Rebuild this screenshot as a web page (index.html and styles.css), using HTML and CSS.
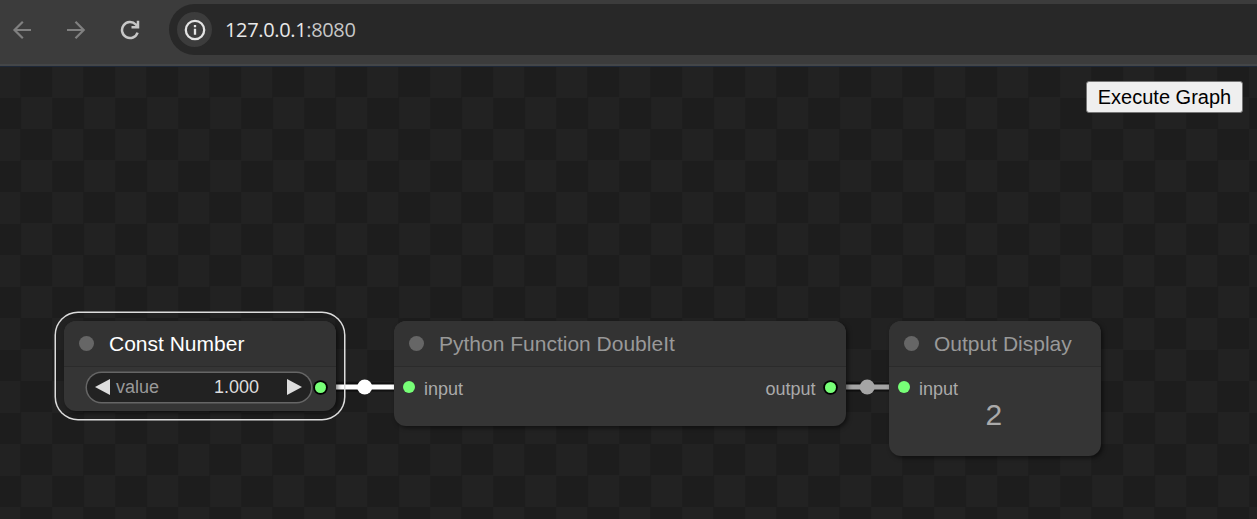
FILE: index.html
```html
<!DOCTYPE html>
<html lang="en">
<head>
<meta charset="utf-8">
<title>Graph Editor</title>
<link rel="stylesheet" href="styles.css">
</head>
<body>
<header class="toolbar">
  <nav class="nav-buttons">
    <svg class="nav-icon dim" viewBox="0 0 20 20"><path d="M19 10H2.500M10.800 1.800L2.500 10l8.300 8.200"/></svg>
    <svg class="nav-icon dim" viewBox="0 0 20 20"><path d="M1 10h16.500M9.500 1.800L17.700 10l-8.200 8.200"/></svg>
    <svg class="nav-icon" viewBox="0 0 20 20"><path d="M17.600 12.600A8 8 0 1 1 15.800 4.500l2 2.300M18 .8v6.500h-6.500"/></svg>
  </nav>
  <div class="address-bar">
    <span class="site-info">
      <svg viewBox="0 0 22 22"><circle cx="11" cy="11" r="9.200"/><path d="M11 9.800v6M11 6v2.200"/></svg>
    </span>
    <span class="url"><span class="host">127.0.0.1</span>:8080</span>
  </div>
</header>
<main class="canvas">
  <button class="execute">Execute Graph</button>
  <svg class="links" viewBox="0 0 1257 453">
    <path class="link-edge" d="M320 321H409M830 321H904"/>
    <path class="link active" d="M320 321H409"/>
    <path class="link" d="M830 321H904"/>
    <circle class="link-dot active" cx="364.700" cy="321" r="7.500"/>
    <circle class="link-dot" cx="867.200" cy="321" r="7.500"/>
  </svg>
  <section class="node const-node selected">
    <h2 class="node-title">Const Number</h2>
    <div class="node-body">
      <div class="number-widget">
        <svg class="arrow" viewBox="0 0 15 16"><path d="M15 0v16L0 8z"/></svg>
        <span class="widget-name">value</span>
        <span class="widget-value">1.000</span>
        <svg class="arrow" viewBox="0 0 15 16"><path d="M0 0v16l15-8z"/></svg>
      </div>
      <i class="slot out"></i>
    </div>
  </section>
  <section class="node function-node">
    <h2 class="node-title">Python Function DoubleIt</h2>
    <div class="node-body">
      <div class="port"><i class="slot"></i><span>input</span></div>
      <div class="port"><span>output</span><i class="slot out"></i></div>
    </div>
  </section>
  <section class="node display-node">
    <h2 class="node-title">Output Display</h2>
    <div class="node-body">
      <div class="port"><i class="slot"></i><span>input</span></div>
      <output class="result">2</output>
    </div>
  </section>
</main>
</body>
</html>
```
FILE: styles.css
```css
* { box-sizing: border-box; }

body {
  margin: 0;
  height: 519px;
  display: flex;
  flex-direction: column;
  overflow: hidden;
  background: #1d1d1d;
  font-family: "Liberation Sans", Arial, sans-serif;
}

.toolbar {
  display: flex;
  height: 66px;
  padding: 4px 0 0 12px;
  background: #3c3c3c;
  border-bottom: 2px solid #444648;
}

.nav-buttons {
  display: flex;
  gap: 34px;
  width: 157px;
  height: 51px;
  align-items: center;
}

.nav-icon {
  width: 20px;
  height: 20px;
  fill: none;
  stroke: #c7c7c7;
  stroke-width: 2.5;
}

.nav-icon.dim { stroke: #808080; stroke-width: 2.2; }

.address-bar {
  flex: 1;
  display: flex;
  align-items: center;
  height: 51px;
  padding-left: 8px;
  gap: 13px;
  background: #282828;
  border-radius: 26px 0 0 26px;
}

.site-info {
  display: grid;
  place-items: center;
  width: 35px;
  height: 35px;
  border-radius: 50%;
  background: #3c3c3c;
}

.site-info svg {
  width: 22px;
  height: 22px;
  fill: none;
  stroke: #e3e3e3;
  stroke-width: 2.3;
}

.url {
  font: 20px/27px "Open Sans", sans-serif;
  letter-spacing: -0.35px;
  color: #c7c7c7;
}

.host { color: #e8e8e8; }

.canvas {
  position: relative;
  flex: 1;
  border-top: 1px solid #1e2838;
  background-image: conic-gradient(#1d1d1d 25%, #222 0 50%, #1d1d1d 0 75%, #222 0);
  background-size: 63px 63px;
  background-position: -10.8px -1px;
}

.execute {
  position: absolute;
  top: 14px;
  right: 14px;
  width: 157px;
  height: 32px;
  padding: 0;
  border: 1px solid #767676;
  border-radius: 3px;
  background: #efefef;
  color: #000;
  font: 20px "Liberation Sans", Arial, sans-serif;
}

.links {
  position: absolute;
  top: -1px;
  left: 0;
  width: 1257px;
  height: 453px;
}

.link-edge { stroke: rgba(0, 0, 0, 0.5); stroke-width: 9; }
.link { stroke: #a5a5a5; stroke-width: 5; }
.link.active { stroke: #fff; }
.link-dot { fill: #a5a5a5; }
.link-dot.active { fill: #fff; }

.node {
  position: absolute;
  top: 254px;
  border-radius: 12px;
  background: #353535;
  box-shadow: 2px 2px 4px rgba(0, 0, 0, 0.5);
  color: #999;
}

.const-node { left: 64px; width: 271.500px; height: 90px; }
.function-node { left: 394px; width: 451.500px; height: 105px; }
.display-node { left: 889px; width: 211.500px; height: 135px; }

.selected::after {
  content: "";
  position: absolute;
  inset: -8px;
  border-radius: 22px;
  box-shadow: 0 0 0 1.5px #ddd;
}

.node-title {
  display: flex;
  align-items: center;
  gap: 15px;
  height: 46px;
  margin: 0;
  padding-left: 15px;
  border-bottom: 1px solid #2b2b2b;
  border-radius: 12px 12px 0 0;
  background: #333;
  font-size: 21px;
  font-weight: normal;
}

.node-title::before {
  content: "";
  width: 15px;
  height: 15px;
  border-radius: 50%;
  background: #666;
}

.selected .node-title { color: #fff; }

.node-body {
  display: flex;
  justify-content: space-between;
  align-items: flex-start;
  padding: 9px 9px 0 9px;
  font-size: 18px;
}

.const-node .node-body { padding: 6px 9px 0 23px; }

.number-widget {
  display: flex;
  align-items: center;
  width: 224px;
  height: 29px;
  padding: 0 9px 0 8px;
  border-radius: 15px;
  background: #222;
  box-shadow: 0 0 0 1.5px #666;
}

.arrow { width: 15px; height: 16px; margin-top: -1px; fill: #ddd; }
.widget-name { flex: 1; margin-left: 6px; }
.widget-value { margin-right: 28px; color: #ddd; }

.port {
  display: flex;
  align-items: flex-start;
  gap: 9px;
  color: #aaa;
}

.port span { line-height: 20px; padding-top: 3px; }

.slot {
  width: 12px;
  height: 12px;
  margin-top: 5px;
  border-radius: 50%;
  background: #7f7;
}

.slot.out {
  width: 11px;
  height: 11px;
  margin: 6px 1px 0 0;
  box-shadow: 0 0 0 1.8px #000;
}

.const-node .slot.out { margin-top: 9px; }

.display-node .node-body { flex-direction: column; padding-right: 0; }

.result {
  align-self: center;
  margin: 1px 0 0 -11px;
  color: #aaa;
  font-size: 30px;
  line-height: 30px;
}
```
